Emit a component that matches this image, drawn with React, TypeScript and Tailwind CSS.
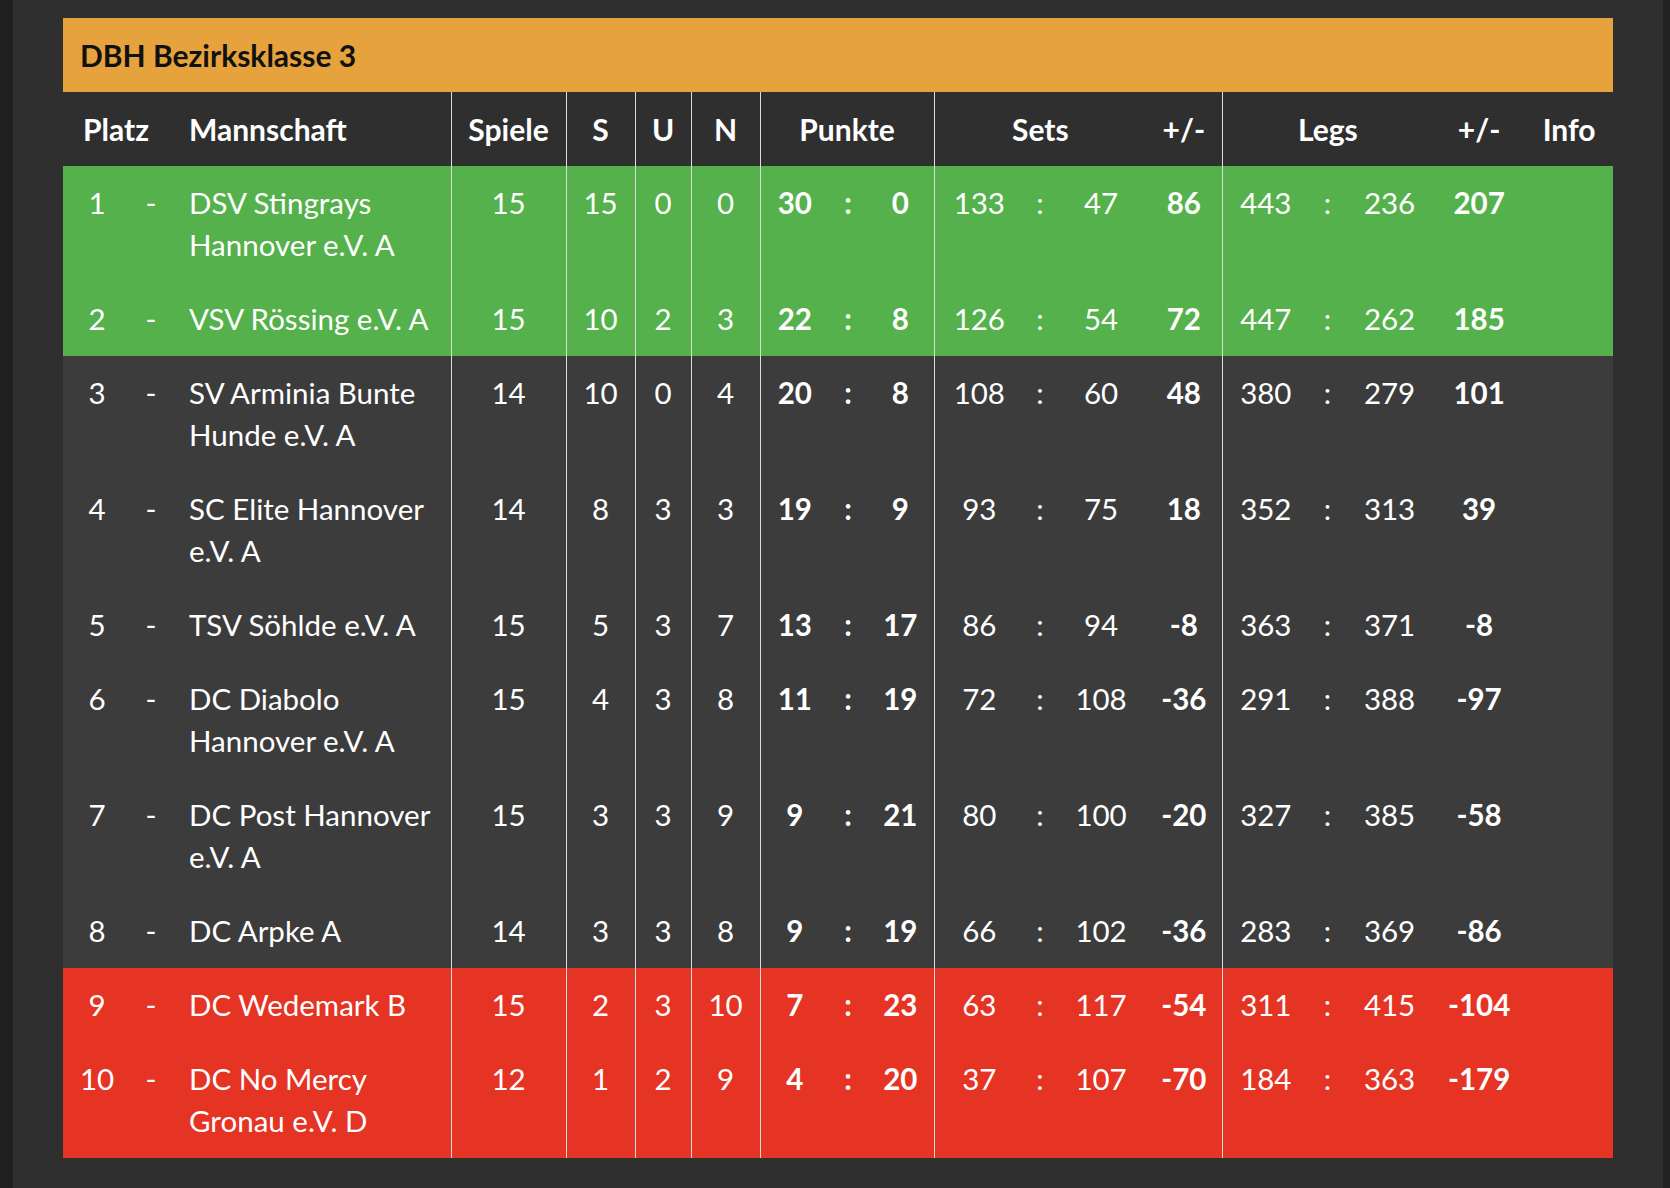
import React from "react";

type Row = {
  rank: number;
  name: string[];
  spiele: number;
  s: number;
  u: number;
  n: number;
  punkte: [number, number];
  sets: [number, number, number];
  legs: [number, number, number];
  zone: "up" | "mid" | "down";
};

const rows: Row[] = [
  { rank: 1, name: ["DSV Stingrays", "Hannover e.V. A"], spiele: 15, s: 15, u: 0, n: 0, punkte: [30, 0], sets: [133, 47, 86], legs: [443, 236, 207], zone: "up" },
  { rank: 2, name: ["VSV Rössing e.V. A"], spiele: 15, s: 10, u: 2, n: 3, punkte: [22, 8], sets: [126, 54, 72], legs: [447, 262, 185], zone: "up" },
  { rank: 3, name: ["SV Arminia Bunte", "Hunde e.V. A"], spiele: 14, s: 10, u: 0, n: 4, punkte: [20, 8], sets: [108, 60, 48], legs: [380, 279, 101], zone: "mid" },
  { rank: 4, name: ["SC Elite Hannover", "e.V. A"], spiele: 14, s: 8, u: 3, n: 3, punkte: [19, 9], sets: [93, 75, 18], legs: [352, 313, 39], zone: "mid" },
  { rank: 5, name: ["TSV Söhlde e.V. A"], spiele: 15, s: 5, u: 3, n: 7, punkte: [13, 17], sets: [86, 94, -8], legs: [363, 371, -8], zone: "mid" },
  { rank: 6, name: ["DC Diabolo", "Hannover e.V. A"], spiele: 15, s: 4, u: 3, n: 8, punkte: [11, 19], sets: [72, 108, -36], legs: [291, 388, -97], zone: "mid" },
  { rank: 7, name: ["DC Post Hannover", "e.V. A"], spiele: 15, s: 3, u: 3, n: 9, punkte: [9, 21], sets: [80, 100, -20], legs: [327, 385, -58], zone: "mid" },
  { rank: 8, name: ["DC Arpke A"], spiele: 14, s: 3, u: 3, n: 8, punkte: [9, 19], sets: [66, 102, -36], legs: [283, 369, -86], zone: "mid" },
  { rank: 9, name: ["DC Wedemark B"], spiele: 15, s: 2, u: 3, n: 10, punkte: [7, 23], sets: [63, 117, -54], legs: [311, 415, -104], zone: "down" },
  { rank: 10, name: ["DC No Mercy", "Gronau e.V. D"], spiele: 12, s: 1, u: 2, n: 9, punkte: [4, 20], sets: [37, 107, -70], legs: [184, 363, -179], zone: "down" },
];

const zoneBg = {
  up: "bg-[#55b14b]",
  mid: "bg-[#3c3c3c]",
  down: "bg-[#e53424]",
};

const line = "border-l border-[#dcdcdc]";

export default function App() {
  return (
    <div className="flex min-h-[1188px] w-full bg-[#2f2f2f] font-[Lato,sans-serif] text-[30px] leading-[42px] text-white">
      <div className="w-[13px] shrink-0 bg-[#202020]" />
      <main className="flex-1 px-[50px] pt-[18px] pb-[30px]">
        {/* Title */}
        <div className="h-[74px] bg-[#e6a23d] py-4 pl-[17px] font-bold text-[#111]">
          DBH Bezirksklasse 3
        </div>

        <table className="w-full table-fixed border-collapse">
          <colgroup>
            <col className="w-[68px]" />
            <col className="w-[40px]" />
            <col className="w-[280px]" />
            <col className="w-[115px]" />
            <col className="w-[69px]" />
            <col className="w-[56px]" />
            <col className="w-[69px]" />
            <col className="w-[69px]" />
            <col className="w-[38px]" />
            <col className="w-[67px]" />
            <col className="w-[90px]" />
            <col className="w-[32px]" />
            <col className="w-[90px]" />
            <col className="w-[76px]" />
            <col className="w-[87px]" />
            <col className="w-[37px]" />
            <col className="w-[87px]" />
            <col className="w-[92px]" />
            <col className="w-[88px]" />
          </colgroup>
          <thead>
            <tr className="h-[74px] font-bold">
              <th colSpan={2} className="py-4 pl-5 text-left font-bold">Platz</th>
              <th className="py-4 pl-[18px] text-left font-bold">Mannschaft</th>
              <th className={`py-4 text-center font-bold ${line}`}>Spiele</th>
              <th className={`py-4 text-center font-bold ${line}`}>S</th>
              <th className={`py-4 text-center font-bold ${line}`}>U</th>
              <th className={`py-4 text-center font-bold ${line}`}>N</th>
              <th colSpan={3} className={`py-4 text-center font-bold ${line}`}>Punkte</th>
              <th colSpan={3} className={`py-4 text-center font-bold ${line}`}>Sets</th>
              <th className="py-4 text-center font-bold">+/-</th>
              <th colSpan={3} className={`py-4 text-center font-bold ${line}`}>Legs</th>
              <th className="py-4 text-center font-bold">+/-</th>
              <th className="py-4 text-center font-bold">Info</th>
            </tr>
          </thead>
          <tbody className="text-[29.5px]">
            {rows.map((r) => (
              <tr key={r.rank} className={`${zoneBg[r.zone]} align-top`}>
                <td className="py-4 text-center">{r.rank}</td>
                <td className="py-4 text-center">-</td>
                <td className="py-4 pl-[18px] whitespace-nowrap">
                  {r.name.map((l, i) => (
                    <div key={i}>{l}</div>
                  ))}
                </td>
                <td className={`py-4 text-center ${line}`}>{r.spiele}</td>
                <td className={`py-4 text-center ${line}`}>{r.s}</td>
                <td className={`py-4 text-center ${line}`}>{r.u}</td>
                <td className={`py-4 text-center ${line}`}>{r.n}</td>
                <td className={`py-4 text-center font-bold ${line}`}>{r.punkte[0]}</td>
                <td className="py-4 text-center font-bold">:</td>
                <td className="py-4 text-center font-bold">{r.punkte[1]}</td>
                <td className={`py-4 text-center ${line}`}>{r.sets[0]}</td>
                <td className="py-4 text-center">:</td>
                <td className="py-4 text-center">{r.sets[1]}</td>
                <td className="py-4 text-center font-bold">{r.sets[2]}</td>
                <td className={`py-4 text-center ${line}`}>{r.legs[0]}</td>
                <td className="py-4 text-center">:</td>
                <td className="py-4 text-center">{r.legs[1]}</td>
                <td className="py-4 text-center font-bold">{r.legs[2]}</td>
                <td className="py-4" />
              </tr>
            ))}
          </tbody>
        </table>
      </main>
      <div className="w-[7px] shrink-0 bg-[#222]" />
    </div>
  );
}
